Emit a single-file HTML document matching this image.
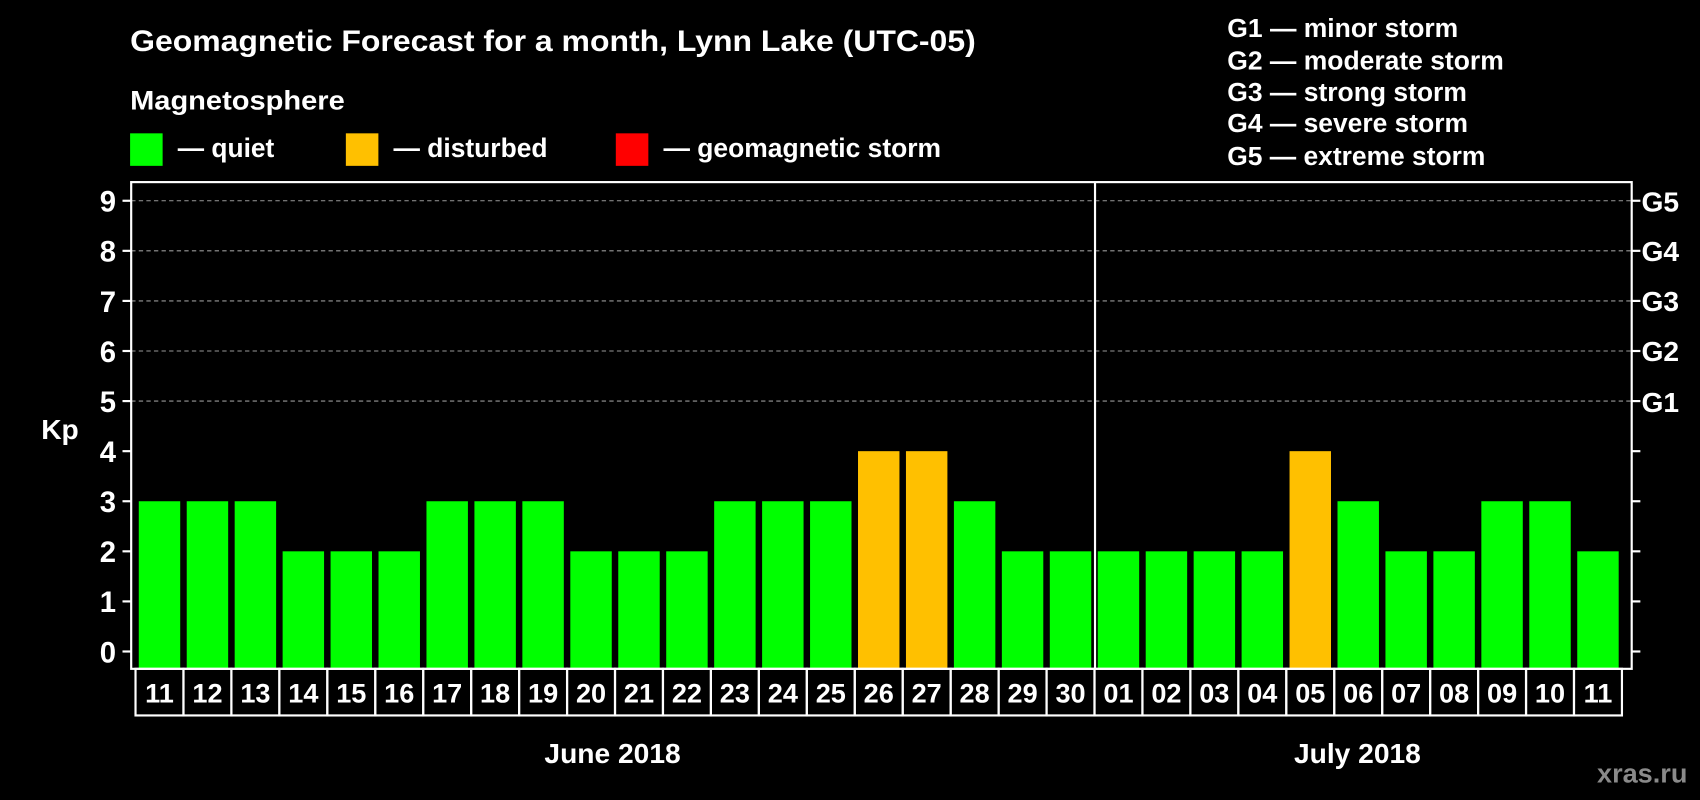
<!DOCTYPE html>
<html><head><meta charset="utf-8"><style>html,body{margin:0;padding:0;background:#000;overflow:hidden}svg{display:block}text{font-family:"Liberation Sans",sans-serif;font-weight:bold;fill:#fff}</style></head><body>
<svg width="1700" height="800" viewBox="0 0 1568 738" preserveAspectRatio="none" xmlns="http://www.w3.org/2000/svg">
<rect width="1568" height="738" fill="#000"/>
<text x="120" y="47" font-size="27" textLength="780" lengthAdjust="spacingAndGlyphs">Geomagnetic Forecast for a month, Lynn Lake (UTC-05)</text>
<text x="120" y="101" font-size="25" textLength="198" lengthAdjust="spacingAndGlyphs">Magnetosphere</text>
<rect x="120" y="123" width="30" height="30" fill="#00ff00"/>
<text x="164" y="145" font-size="25" textLength="89" lengthAdjust="spacingAndGlyphs">— quiet</text>
<rect x="319" y="123" width="30" height="30" fill="#ffc000"/>
<text x="363" y="145" font-size="25" textLength="142" lengthAdjust="spacingAndGlyphs">— disturbed</text>
<rect x="568" y="123" width="30" height="30" fill="#ff0000"/>
<text x="612" y="145" font-size="25" textLength="256" lengthAdjust="spacingAndGlyphs">— geomagnetic storm</text>
<g font-size="24">
<text x="1132" y="34" textLength="213" lengthAdjust="spacingAndGlyphs">G1 — minor storm</text>
<text x="1132" y="64" textLength="255" lengthAdjust="spacingAndGlyphs">G2 — moderate storm</text>
<text x="1132" y="93" textLength="221" lengthAdjust="spacingAndGlyphs">G3 — strong storm</text>
<text x="1132" y="122" textLength="222" lengthAdjust="spacingAndGlyphs">G4 — severe storm</text>
<text x="1132" y="152" textLength="238" lengthAdjust="spacingAndGlyphs">G5 — extreme storm</text>
</g>
<g stroke="#999" stroke-width="1" stroke-dasharray="4,3">
<line x1="121" x2="1505" y1="185.2" y2="185.2"/><line x1="121" x2="1505" y1="231.4" y2="231.4"/><line x1="121" x2="1505" y1="277.6" y2="277.6"/><line x1="121" x2="1505" y1="323.8" y2="323.8"/><line x1="121" x2="1505" y1="370" y2="370"/>
</g>
<g id="bars"></g>
<rect x="121" y="168" width="1384" height="449" fill="none" stroke="#fff" stroke-width="2"/>
<line x1="1010" y1="168" x2="1010" y2="617" stroke="#fff" stroke-width="2"/>
<g id="ticks" stroke="#fff" stroke-width="2"></g>
<g id="ylab" font-size="27" text-anchor="end"></g>
<g font-size="26">
<text x="1514" y="195">G5</text><text x="1514" y="241">G4</text><text x="1514" y="287">G3</text><text x="1514" y="333">G2</text><text x="1514" y="380">G1</text>
</g>
<text x="38" y="405" font-size="26">Kp</text>
<g id="cells"></g>
<text x="565" y="704" font-size="26" text-anchor="middle">June 2018</text>
<text x="1252" y="704" font-size="26" text-anchor="middle">July 2018</text>
<text x="1473" y="722" font-size="25" style="fill:#8a8a8a">xras.ru</text>
<script>
var ns="http://www.w3.org/2000/svg";
function el(p,t,a,txt){var e=document.createElementNS(ns,t);for(var k in a)e.setAttribute(k,a[k]);if(txt!=null)e.textContent=txt;document.getElementById(p).appendChild(e);}
var v=[3,3,3,2,2,2,3,3,3,2,2,2,3,3,3,4,4,3,2,2,2,2,2,2,4,3,2,2,3,3,2];
var o={15:1,16:1,24:1};
var d=["11","12","13","14","15","16","17","18","19","20","21","22","23","24","25","26","27","28","29","30","01","02","03","04","05","06","07","08","09","10","11"];
var w=(1496-125)/31;
for(var i=0;i<31;i++){var x=125+i*w;var yt=601-v[i]*46.2;
el("bars","rect",{x:x+3,y:yt,width:w-6,height:617-yt,fill:o[i]?"#ffc000":"#00ff00"});
el("cells","rect",{x:x,y:617,width:w,height:43,fill:"none",stroke:"#fff","stroke-width":2});
el("cells","text",{x:x+w/2,y:648,"font-size":"25","text-anchor":"middle"},d[i]);}
for(var k=0;k<=9;k++){var y=601-k*46.2;
el("ticks","line",{x1:113,x2:121,y1:y,y2:y});el("ticks","line",{x1:1505,x2:1513,y1:y,y2:y});
el("ylab","text",{x:107,y:y+10},String(k));}
</script>
</svg>
</body></html>
